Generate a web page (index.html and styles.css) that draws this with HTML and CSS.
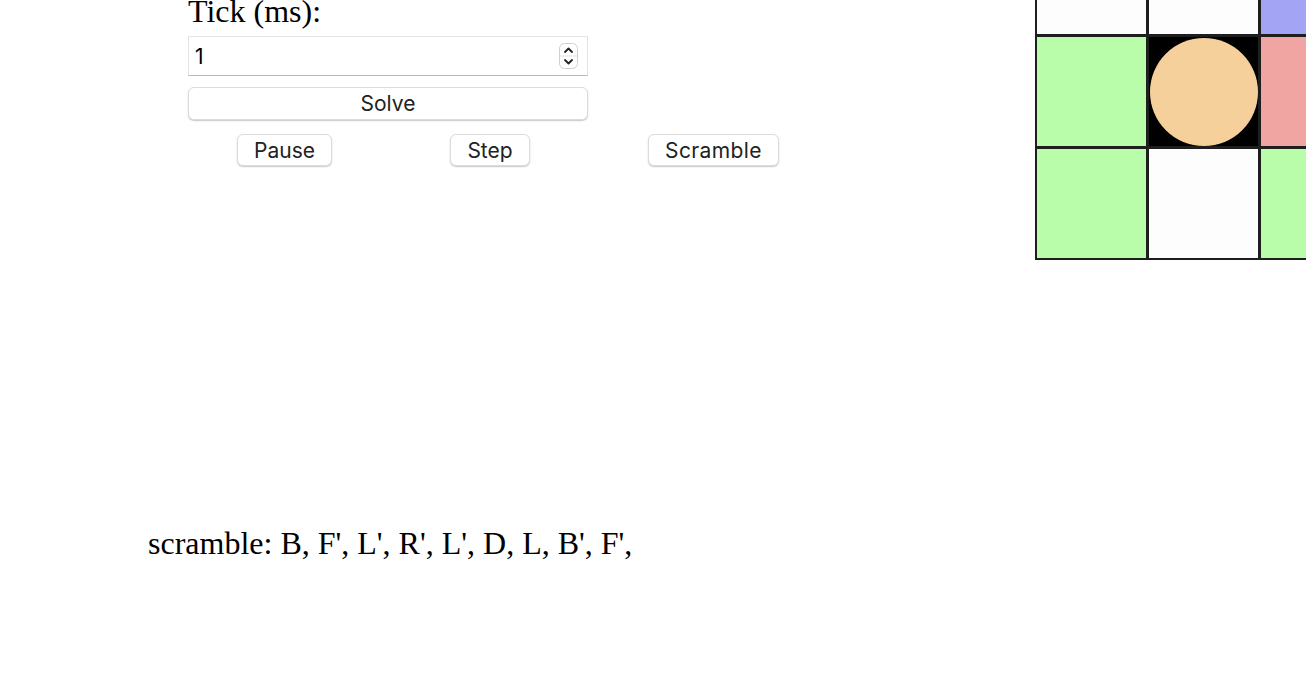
FILE: index.html
```html
<!DOCTYPE html>
<html>
<head>
<meta charset="utf-8">
<link rel="stylesheet" href="styles.css">
</head>
<body>
<div class="page">
  <div class="left">
    <form class="controls">
      <label class="tick-label">Tick (ms):</label>
      <div class="num-wrap">
        <input class="num" type="text" value="1">
        <span class="spinner">
          <svg width="19" height="26" viewBox="0 0 19 26">
            <rect x="0.5" y="0.5" width="18" height="25" rx="5" fill="#fff" stroke="#cfcfcf"/>
            <line x1="1" y1="13" x2="18" y2="13" stroke="#e2e2e2"/>
            <path d="M6 9 L9.5 5.5 L13 9" fill="none" stroke="#222" stroke-width="1.8" stroke-linecap="round" stroke-linejoin="round"/>
            <path d="M6 17 L9.5 20.5 L13 17" fill="none" stroke="#222" stroke-width="1.8" stroke-linecap="round" stroke-linejoin="round"/>
          </svg>
        </span>
      </div>
      <button type="button" class="btn solve">Solve</button>
      <div class="btn-row">
        <button type="button" class="btn btn-pause">Pause</button>
        <button type="button" class="btn btn-step">Step</button>
        <button type="button" class="btn btn-scramble">Scramble</button>
      </div>
    </form>
    <p class="scramble">scramble: B, F', L', R', L', D, L, B', F',</p>
  </div>
  <div class="board">
    <div class="cell white"></div>
    <div class="cell white"></div>
    <div class="cell blue"></div>
    <div class="cell green"></div>
    <div class="cell center"><span class="ball"></span></div>
    <div class="cell red"></div>
    <div class="cell green"></div>
    <div class="cell white"></div>
    <div class="cell green"></div>
  </div>
</div>
</body>
</html>
```
FILE: styles.css
```css
html, body {
  margin: 0;
  padding: 0;
  background: #fff;
  overflow: hidden;
}
body {
  width: 1306px;
  height: 676px;
  font-family: "Liberation Serif", "Times New Roman", serif;
}
.page {
  display: flex;
  align-items: flex-start;
  width: 1306px;
  height: 683px;
  margin-top: -7px;
  overflow: hidden;
}
.left {
  flex: none;
  width: 887px;
  padding-left: 148px;
}
.controls {
  width: 400px;
  margin: 0 0 0 40px;
  display: flex;
  flex-direction: column;
}
.tick-label {
  display: block;
  font-size: 32px;
  line-height: 36px;
  color: #000;
}
.num-wrap {
  position: relative;
  margin-top: 7px;
  height: 40px;
}
.num {
  box-sizing: border-box;
  width: 400px;
  height: 40px;
  margin: 0;
  padding: 0 6px;
  border: 1px solid #e4e4e4;
  border-bottom: 1px solid #b9b9b9;
  border-radius: 0;
  font-family: "Inter", "Noto Sans", sans-serif;
  font-size: 21px;
  color: #000;
  background: #fff;
  outline: none;
}
.spinner {
  position: absolute;
  left: 371px;
  top: 7px;
  width: 19px;
  height: 26px;
  line-height: 0;
}
.btn {
  box-sizing: border-box;
  height: 32px;
  padding: 0;
  margin: 0;
  border: 1px solid #dcdcdc;
  border-radius: 6px;
  background: #fff;
  box-shadow: 0 1px 1.5px rgba(0, 0, 0, 0.22);
  font-family: "Inter", "Noto Sans", sans-serif;
  font-size: 21px;
  color: #222;
  line-height: 1;
  text-align: center;
  flex: none;
}
.btn-pause { width: 95px; }
.btn-step { width: 80px; }
.btn-scramble { width: 131px; letter-spacing: 0.4px; }
.solve {
  width: 400px;
  height: 33px;
  margin-top: 11px;
}
.btn-row {
  display: flex;
  gap: 118px;
  margin-top: 14px;
  padding-left: 49px;
}
.scramble {
  margin: 359px 0 0 0;
  font-size: 32px;
  line-height: 36px;
  color: #000;
  white-space: nowrap;
}
.board {
  flex: none;
  margin-top: -70px;
  display: grid;
  grid-template-columns: repeat(3, 109px);
  grid-template-rows: repeat(3, 109px);
  gap: 3px;
  padding: 2px;
  background: #1e1e1e;
}
.cell {
  width: 109px;
  height: 109px;
}
.white { background: #fdfdfd; }
.green { background: #b9fcaa; }
.blue { background: #a4a4f5; }
.red { background: #f1a5a3; }
.center {
  background: #000;
  display: flex;
  align-items: center;
  justify-content: center;
}
.ball {
  width: 108px;
  height: 108px;
  border-radius: 50%;
  background: #f5d09b;
}
```
